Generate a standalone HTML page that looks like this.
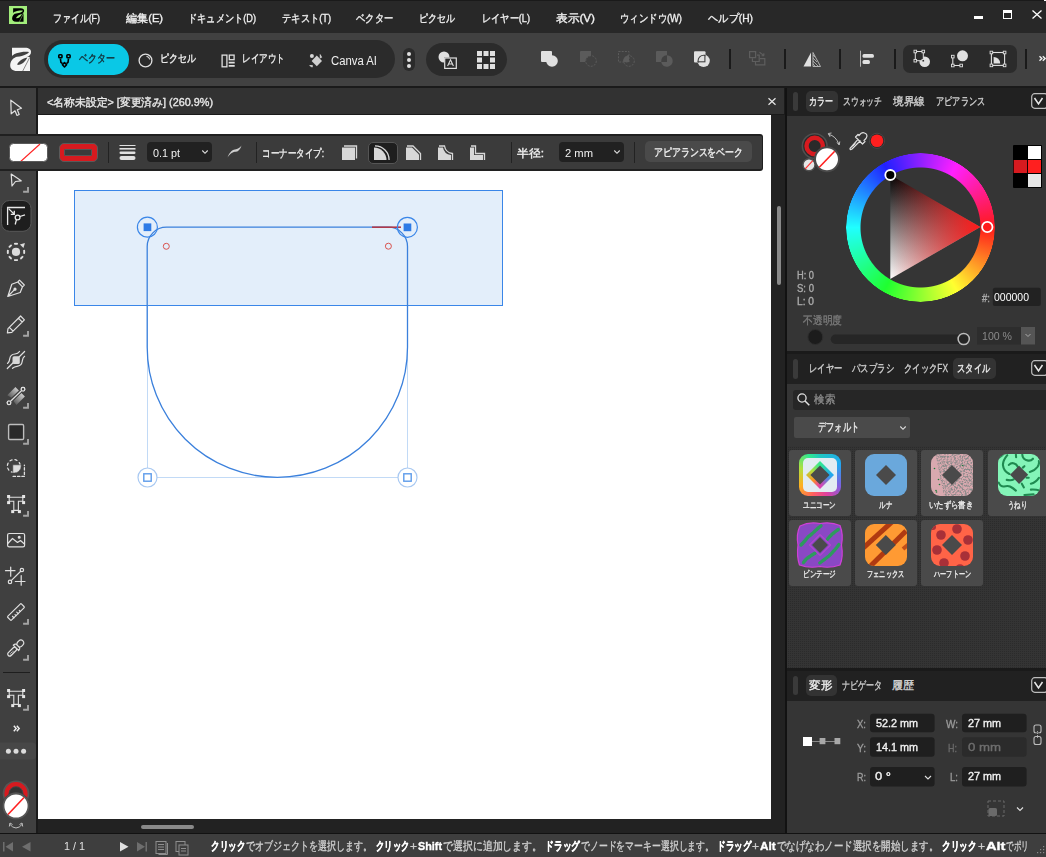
<!DOCTYPE html>
<html><head><meta charset="utf-8">
<style>
*{box-sizing:border-box;margin:0;padding:0}
html,body{width:1046px;height:857px;overflow:hidden;background:#1b1b1b;font-family:"Liberation Sans",sans-serif;}
.a{position:absolute}
.t{position:absolute;white-space:nowrap;transform-origin:0 0;line-height:1;-webkit-text-stroke-width:0.35px}
svg{position:absolute;overflow:visible}
.dots{background-image:radial-gradient(rgba(255,255,255,0.035) 0.6px,transparent 0.8px);background-size:4px 4px}
</style></head><body>

<!-- MENU BAR -->
<div class="a" style="left:0;top:0;width:1046px;height:33px;background:#282828;border-top:1px solid #1a1a1a"></div>
<div class="a" style="left:1044px;top:0;width:2px;height:1px;background:#fff"></div>
<div class="a" style="left:9px;top:5.5px;width:18.3px;height:18.6px;background:#a3ee7c"></div>
<svg style="left:0;top:0" width="40" height="33" viewBox="0 0 40 33"><g transform="translate(12.1 8.2) scale(0.578) translate(-10.2 -47.75)">
<path d="M12 47.75H25C29 47.75 31 49.5 31 52C31 54.5 29.5 56 27 57H30V71H17C12.5 71 10.2 68.5 10.2 65.5C10.2 61 13 58 17 56.5L12 56z" fill="#000"/>
<path d="M11.8 56.8C12 54 22 51 29 52.1C27.5 54.8 20 57.5 11.8 56.8z" fill="#a3ee7c"/>
<path d="M17.6 65C16 63.5 22 58.5 27.3 57.6C26 61 22 65 17.6 65z" fill="#a3ee7c"/>
<path d="M22.5 71.5L29.8 57.3" stroke="#a3ee7c" stroke-width="0.8"/>
</g></svg>
<div class="t" style="left:53px;top:13px;font-size:11px;color:#f0f0f0;--w:47;transform:scaleX(0.8097)">ファイル(F)</div>
<div class="t" style="left:126px;top:13px;font-size:11px;color:#f0f0f0;--w:37;transform:scaleX(1.0090)">編集(E)</div>
<div class="t" style="left:188px;top:13px;font-size:11px;color:#f0f0f0;--w:68;transform:scaleX(0.8366)">ドキュメント(D)</div>
<div class="t" style="left:282px;top:13px;font-size:11px;color:#f0f0f0;--w:49;transform:scaleX(0.8441)">テキスト(T)</div>
<div class="t" style="left:356px;top:13px;font-size:11px;color:#f0f0f0;--w:37;transform:scaleX(0.8409)">ベクター</div>
<div class="t" style="left:419px;top:13px;font-size:11px;color:#f0f0f0;--w:36;transform:scaleX(0.8182)">ピクセル</div>
<div class="t" style="left:482px;top:13px;font-size:11px;color:#f0f0f0;--w:48;transform:scaleX(0.8355)">レイヤー(L)</div>
<div class="t" style="left:556px;top:13px;font-size:11px;color:#f0f0f0;--w:39;transform:scaleX(1.0635)">表示(V)</div>
<div class="t" style="left:620px;top:13px;font-size:11px;color:#f0f0f0;--w:62;transform:scaleX(0.8526)">ウィンドウ(W)</div>
<div class="t" style="left:708px;top:13px;font-size:11px;color:#f0f0f0;--w:45;transform:scaleX(0.9320)">ヘルプ(H)</div>
<div class="a" style="left:974px;top:16px;width:9px;height:3px;background:#fff"></div>
<div class="a" style="left:1003px;top:10px;width:9px;height:9px;border:1.2px solid #fff;border-top-width:3px"></div>
<svg style="left:1032px;top:10px" width="10" height="9" viewBox="0 0 10 9"><path d="M0.5 0.5L9.5 8.5M9.5 0.5L0.5 8.5" stroke="#fff" stroke-width="1.3"/></svg>

<!-- TOOLBAR -->
<div class="a" style="left:0;top:33px;width:1046px;height:53px;background:#414141"></div>
<div class="a" style="left:0;top:86px;width:1046px;height:2px;background:#1a1a1a"></div>
<svg style="left:0;top:0" width="40" height="80" viewBox="0 0 40 80"><g id="lg">
<path d="M12 47.75H25C29 47.75 31 49.5 31 52C31 54.5 29.5 56 27 57H30V71H17C12.5 71 10.2 68.5 10.2 65.5C10.2 61 13 58 17 56.5L12 56z" fill="#f4f4f4"/>
<path d="M11.8 56.8C12 54 22 51 29 52.1C27.5 54.8 20 57.5 11.8 56.8z" fill="#414141"/>
<path d="M17.6 65C16 63.5 22 58.5 27.3 57.6C26 61 22 65 17.6 65z" fill="#414141"/>
<path d="M22.5 71.5L29.8 57.3" stroke="#414141" stroke-width="0.6"/>
</g></svg>
<div class="a" style="left:44px;top:40px;width:351px;height:38px;background:#2b2b2b;border-radius:19px"></div>
<div class="a" style="left:48px;top:44px;width:81px;height:31px;background:#0ac8e6;border-radius:15px"></div>
<svg style="left:57px;top:53px" width="15" height="15" viewBox="0 0 15 15"><g fill="none" stroke="#000" stroke-width="1.6" stroke-linejoin="round"><rect x="1.8" y="1.8" width="3.2" height="3" rx="0.8"/><rect x="9.9" y="1.8" width="3.2" height="3" rx="0.8"/><path d="M7.5 9.6L9.6 11.8 7.5 14 5.4 11.8z"/><path d="M3.4 5.6L3.9 9.3 5.6 10.6M11.5 5.6L11 9.3 9.4 10.6"/></g></svg>
<div class="t" style="left:79px;top:53.4px;font-size:11px;color:#152b33;--w:36;transform:scaleX(0.8182)">ベクター</div>
<svg style="left:138px;top:53px" width="15" height="15" viewBox="0 0 15 15"><circle cx="7.5" cy="7.5" r="6.4" fill="none" stroke="#e0e0e0" stroke-width="1.3"/><path d="M8.5 3.2A4.4 4.4 0 0 1 11.8 6.5" fill="none" stroke="#e0e0e0" stroke-width="1.1"/></svg>
<div class="t" style="left:160px;top:53.4px;font-size:11px;color:#f0f0f0;--w:36;transform:scaleX(0.8182)">ピクセル</div>
<svg style="left:220.5px;top:53.5px" width="15" height="14" viewBox="0 0 15 14"><g fill="none" stroke="#e0e0e0" stroke-width="1.3"><rect x="1.1" y="1.1" width="4.8" height="11.7"/><rect x="8.3" y="1.1" width="4.8" height="4.6"/></g><path d="M7.7 8.6h6M7.7 11.8h6" stroke="#e0e0e0" stroke-width="1.8"/></svg>
<div class="t" style="left:242px;top:53.4px;font-size:11px;color:#f0f0f0;--w:43;transform:scaleX(0.7818)">レイアウト</div>
<svg style="left:309px;top:53px" width="14" height="14" viewBox="0 0 14 14"><path d="M7.8 2.6L13 7.9 7.8 13.2 2.6 7.9z" fill="#cfcfcf"/><circle cx="2.9" cy="3" r="2" fill="#d6d6d6"/><path d="M11.2 1.6L12.6 4.3 11.3 5z" fill="#d6d6d6" stroke="#d6d6d6" stroke-width="0.8"/><path d="M0.7 12.6L3.4 12.4 3.2 14.1z" fill="#d6d6d6" stroke="#d6d6d6" stroke-width="0.8"/></svg>
<div class="t" style="left:331px;top:54.5px;font-size:12.5px;color:#f0f0f0;--w:46;transform:scaleX(0.9067);-webkit-text-stroke-width:0">Canva AI</div>
<div class="a" style="left:403px;top:48px;width:12px;height:23px;background:#2b2b2b;border-radius:6px"></div>
<div class="a" style="left:407px;top:52px;width:4px;height:4px;background:#e0e0e0;border-radius:2px"></div>
<div class="a" style="left:407px;top:58px;width:4px;height:4px;background:#e0e0e0;border-radius:2px"></div>
<div class="a" style="left:407px;top:64px;width:4px;height:4px;background:#e0e0e0;border-radius:2px"></div>
<div class="a" style="left:426px;top:43px;width:81px;height:33px;background:#2b2b2b;border-radius:16.5px"></div>
<svg style="left:438px;top:51px" width="19" height="18" viewBox="0 0 19 18"><circle cx="6" cy="6" r="5.5" fill="#e0e0e0"/><rect x="6" y="6.5" width="12.3" height="11" fill="#2b2b2b"/><rect x="6.7" y="7" width="11.6" height="10.4" fill="none" stroke="#e0e0e0" stroke-width="1.2"/><path d="M9.6 15L12.5 8.8 15.4 15M10.6 13h3.8" fill="none" stroke="#e0e0e0" stroke-width="1.1"/></svg>
<svg style="left:477px;top:51px" width="18" height="18" viewBox="0 0 18 18"><g fill="#e0e0e0"><rect x="0" y="0" width="5" height="5"/><rect x="6.5" y="0" width="5" height="5"/><rect x="13" y="0" width="5" height="5"/><rect x="0" y="6.5" width="5" height="5"/><rect x="13" y="6.5" width="5" height="5"/><rect x="0" y="13" width="5" height="5"/><rect x="6.5" y="13" width="5" height="5"/><rect x="13" y="13" width="5" height="5"/></g></svg>
<!-- boolean ops -->
<svg style="left:541px;top:51px" width="17" height="16" viewBox="0 0 17 16"><rect x="0" y="0" width="11" height="11" rx="1" fill="#e0e0e0"/><circle cx="11" cy="10" r="5.8" fill="#e0e0e0"/></svg>
<svg style="left:580px;top:51px" width="17" height="16" viewBox="0 0 17 16"><path d="M0 1a1 1 0 0 1 1-1h10v4.8A5.8 5.8 0 0 0 5.2 11H0z" fill="#5b5b5b"/><circle cx="11" cy="10" r="5.3" fill="none" stroke="#5b5b5b" stroke-width="1" stroke-dasharray="2 1.2"/></svg>
<svg style="left:618px;top:51px" width="17" height="16" viewBox="0 0 17 16"><rect x="0.5" y="0.5" width="10.5" height="10.5" fill="none" stroke="#5b5b5b" stroke-dasharray="2 1.2"/><path d="M11 4.2A5.8 5.8 0 0 0 5.2 10v1H11z" fill="#5b5b5b"/><circle cx="11" cy="10" r="5.3" fill="none" stroke="#5b5b5b" stroke-width="1" stroke-dasharray="2 1.2"/></svg>
<svg style="left:656px;top:51px" width="17" height="16" viewBox="0 0 17 16"><path d="M0 1a1 1 0 0 1 1-1h10v4.2A5.8 5.8 0 0 0 5.2 11H0z" fill="#5b5b5b"/><path d="M11 4.2A5.8 5.8 0 1 1 5.2 11H11z" fill="#5b5b5b"/></svg>
<svg style="left:693px;top:51px" width="18" height="18" viewBox="0 0 18 18"><defs><clipPath id="dsq"><rect x="1" y="0.2" width="11.5" height="11.2"/></clipPath><clipPath id="dci"><circle cx="10.6" cy="9.8" r="6.2"/></clipPath></defs><rect x="1" y="0.2" width="11.5" height="11.2" rx="1" fill="#e0e0e0"/><circle cx="10.6" cy="9.8" r="6.2" fill="#e0e0e0"/><circle cx="10.6" cy="9.8" r="5.5" fill="none" stroke="#414141" stroke-width="1.1" clip-path="url(#dsq)"/><rect x="1" y="0.2" width="10.9" height="10.6" fill="none" stroke="#414141" stroke-width="1.1" clip-path="url(#dci)"/></svg>
<div class="a" style="left:729.3px;top:49px;width:1.5px;height:20px;background:#1a1a1a"></div>
<svg style="left:749px;top:51px" width="17" height="17" viewBox="0 0 17 17"><g fill="none" stroke="#5e5e5e" stroke-width="1.2"><rect x="0.6" y="0.6" width="6" height="6"/><path d="M3.4 7.2V10.5H10.2V4.2H8"/><path d="M6.5 10.6V13.8H15.8V7.6H11"/></g><path d="M10.5 1.2L15 4.6M15 4.6L14.8 2.3M15 4.6L12.6 4.7" fill="none" stroke="#5e5e5e" stroke-width="1.1"/></svg>
<div class="a" style="left:784.3px;top:49px;width:1.5px;height:20px;background:#1a1a1a"></div>
<svg style="left:803px;top:52px" width="18" height="15" viewBox="0 0 18 15"><path d="M8 0.5V14.5H0.5z" fill="#e0e0e0"/><path d="M10 0.5V14.5H17.5z" fill="none" stroke="#bdbdbd" stroke-width="0.9"/><path d="M10 3l2 2M10 6l4 4M10 9l5.5 5.5M10 12l2.5 2.5" stroke="#bdbdbd" stroke-width="0.8"/></svg>
<div class="a" style="left:839.3px;top:49px;width:1.5px;height:20px;background:#1a1a1a"></div>
<svg style="left:859px;top:50px" width="16" height="17" viewBox="0 0 16 17"><rect x="1" y="0.7" width="1" height="16" fill="#b4b4b4"/><rect x="3.5" y="4" width="11.4" height="3.8" rx="1.5" fill="#e0e0e0"/><rect x="3.5" y="10" width="7.4" height="4" rx="1.5" fill="#e0e0e0"/></svg>
<div class="a" style="left:894.3px;top:49px;width:1.5px;height:20px;background:#1a1a1a"></div>
<div class="a" style="left:903px;top:45px;width:114px;height:28px;background:#2b2b2b;border-radius:7px"></div>
<svg style="left:914px;top:50px" width="17" height="18" viewBox="0 0 17 18"><circle cx="10.7" cy="11.8" r="5.3" fill="#e0e0e0"/><rect x="1.3" y="1.5" width="8" height="9.2" fill="#2b2b2b"/><rect x="1.3" y="1.5" width="8" height="9.2" fill="none" stroke="#e0e0e0" stroke-width="1"/><g fill="#2b2b2b" stroke="#e0e0e0" stroke-width="0.9"><rect x="0" y="0.2" width="2.6" height="2.6"/><rect x="8" y="0.2" width="2.6" height="2.6"/><rect x="0" y="9.4" width="2.6" height="2.6"/><rect x="8" y="9.4" width="2.6" height="2.6"/></g></svg>
<svg style="left:951px;top:50px" width="18" height="18" viewBox="0 0 18 18"><circle cx="11.5" cy="5.8" r="5.5" fill="#e0e0e0"/><path d="M1.8 7v8.5h8.5" fill="none" stroke="#e0e0e0" stroke-width="1.1"/><g fill="#2b2b2b" stroke="#e0e0e0" stroke-width="0.9"><rect x="0.5" y="5.3" width="2.6" height="2.6"/><rect x="0.5" y="14.2" width="2.6" height="2.6"/><rect x="8.9" y="14.2" width="2.6" height="2.6"/></g></svg>
<svg style="left:990px;top:50px" width="17" height="17" viewBox="0 0 17 17"><rect x="1.4" y="2.5" width="13.2" height="12.9" fill="none" stroke="#e0e0e0" stroke-width="1.1"/><path d="M3.6 7A6.5 6.5 0 0 1 10.2 13.4H3.6z" fill="#e0e0e0"/><g fill="#2b2b2b" stroke="#e0e0e0" stroke-width="0.9"><rect x="0.1" y="1.2" width="2.6" height="2.6"/><rect x="13.3" y="1.2" width="2.6" height="2.6"/><rect x="0.1" y="14.1" width="2.6" height="2.6"/><rect x="13.3" y="14.1" width="2.6" height="2.6"/></g></svg>
<div class="a" style="left:1025.3px;top:49px;width:1.5px;height:20px;background:#1a1a1a"></div>
<svg style="left:1039px;top:56px" width="7" height="5" viewBox="0 0 7 5"><path d="M0.5 0.3L2.8 2.5 0.5 4.7M3.8 0.3L6.1 2.5 3.8 4.7" fill="none" stroke="#f0f0f0" stroke-width="1.4"/></svg>

<!-- LEFT TOOLS -->
<div class="a" style="left:0;top:88px;width:36px;height:745px;background:#404040"></div>
<div class="a" style="left:36px;top:88px;width:2px;height:747px;background:#1a1a1a"></div>
<svg style="left:0;top:88px" width="36" height="745" viewBox="0 88 36 745">
<g fill="none" stroke="#e0e0e0" stroke-width="1.2" stroke-linejoin="round" stroke-linecap="round">
<!-- move -->
<path d="M10.8 100.2L21.5 108.3 17.3 109.8 19.2 114.5 17 115.5 15 110.8 11.2 113.8z"/>
<!-- node -->
<path d="M11.2 174L21.2 180.8 15.5 181.5 12 186z"/>
<!-- pen -->
<path d="M19.5 280.2L24.3 285 22.5 286.8 17.8 282z M17.8 282L22.5 286.8 20.2 292.5 7.8 296.5 11.8 284.2z M8.2 296L14.3 289.9"/>
<circle cx="15" cy="289.2" r="1" fill="#e0e0e0"/>
<!-- pencil -->
<path d="M20.6 316L24.4 319.8 11.8 332.4 7.4 332.9 8 328.6z M18.4 318.2L22.2 322 M9.3 327.3L13 331"/>
<!-- vector brush -->
<path d="M7.3 368.5L24.6 351.5 M7.5 363.4C9.5 362 9.6 360.5 9.8 358.5C10.2 355.5 12 354.2 15 354C17.5 353.8 18.5 353 19.5 351.5 M12.5 368.3C14 367 15.5 366.5 17 366.3C20 366 21.8 364.5 22.2 361.5C22.5 359.5 22.6 357.5 24.6 356.3"/>
<!-- fill tool -->
<circle cx="9" cy="402.8" r="1.8"/><circle cx="23" cy="389.2" r="1.8"/><path d="M10.3 401.5L21.7 390.5"/>
<!-- rect -->
<rect x="8.6" y="424.5" width="15" height="15" rx="1.2" stroke="#bdbdbd" fill="#2a2a2a" stroke-width="1.4"/>
<!-- dotted select -->
<circle cx="13.8" cy="466" r="6.4" stroke-dasharray="2.1 3" stroke-width="1.3"/>
<path d="M13.1 476.4H24.4V465.1" stroke-dasharray="2.4 2" stroke-width="1.3"/>
<!-- image -->
<rect x="7.6" y="533.5" width="17" height="13.4" rx="1.6"/>
<path d="M7.8 543.5L12.5 538.5 17.5 542.5 20.5 540.5 24.4 544"/>
<circle cx="19.2" cy="537.2" r="0.9" fill="#e0e0e0"/>
<!-- transform -->
<path d="M5.5 570.7H15 M10.7 567V576.2 M15.3 581.5H25 M21.2 575.5V585.2 M11.2 580.6L20.7 571.2"/>
<circle cx="10" cy="581.9" r="1.7"/><circle cx="21.9" cy="570" r="1.7"/>
<!-- ruler -->
<g transform="translate(15.95 612) rotate(-44.4)"><rect x="-9.6" y="-2.7" width="19.2" height="5.4" rx="1"/><path d="M-5.5 2.7V0.6M-2.5 2.7V1.2M0.5 2.7V0.6M3.5 2.7V1.2"/></g>
<!-- eyedropper -->
<g transform="translate(15.6 648.2) rotate(-45)" fill="#404040"><rect x="-10.3" y="-2" width="11" height="4" rx="2"/><rect x="3" y="-2.9" width="7.4" height="5.8" rx="2.9"/><path d="M0.5 -3.8Q2.5 -3.8 3.2 -2.6V2.6Q2.5 3.8 0.5 3.8z"/><g fill="#e0e0e0" stroke="none"><circle cx="-7.6" cy="0.3" r="0.55"/><circle cx="-5.8" cy="0.3" r="0.55"/><circle cx="-4" cy="0.3" r="0.55"/></g></g>
</g>
<!-- corner marks -->
<g fill="none" stroke="#a4a4a4" stroke-width="1.9">
<path d="M23.1 191.8H28V187"/>
<path d="M23.1 335.8H28V331"/>
<path d="M23.1 407.8H28V403"/>
<path d="M23.1 443.8H28V439"/>
<path d="M23.1 515.8H28V511"/>
<path d="M23.1 623.8H28V619"/>
<path d="M23.1 659.8H28V655"/>
<path d="M23.1 709.8H28V705"/>
</g>
<!-- selected corner tool -->
<rect x="1.5" y="200.5" width="29.5" height="30.8" rx="8" fill="#1e1e1e" stroke="#585858" stroke-width="1"/>
<g fill="none" stroke="#e8e8e8" stroke-width="1.3">
<path d="M7.6 225V207.5H25"/>
<path d="M8.6 208.6L14.3 214.3 M14.3 210.8V214.3H10.8"/>
<circle cx="17.6" cy="217.5" r="2.4"/><path d="M16.4 219.8L15.2 224.5 M19.8 216.5L25 214.8"/>
</g>
<!-- dotted circle w/ triangle -->
<path d="M23.99 250.06A8.2 8.2 0 0 1 23.99 253.74 M22.95 256.25A8.2 8.2 0 0 1 20.35 258.85 M17.84 259.89A8.2 8.2 0 0 1 14.16 259.89 M11.65 258.85A8.2 8.2 0 0 1 9.05 256.25 M8.01 253.74A8.2 8.2 0 0 1 8.01 250.06 M9.05 247.55A8.2 8.2 0 0 1 11.65 244.95 M14.16 243.91A8.2 8.2 0 0 1 17.84 243.91" fill="none" stroke="#e0e0e0" stroke-width="1.9"/>
<circle cx="16" cy="251.9" r="4.1" fill="#dcdcdc"/>
<path d="M19.9 244.4L24.9 243 23.5 248.1z" fill="#dcdcdc"/>
<!-- vector brush center -->
<rect x="12.5" y="356.3" width="7.3" height="7.6" rx="1.5" fill="#d8d8d8"/>
<!-- fill gradient bars -->
<defs><linearGradient id="fg1" x1="0" y1="1" x2="1" y2="0"><stop offset="0" stop-color="#4a4a4a"/><stop offset="1" stop-color="#e0e0e0"/></linearGradient></defs>
<path d="M7.3 395.2L15.4 387 18.9 390.5 11.3 397.7z" fill="url(#fg1)"/>
<path d="M13.4 401L21.4 393.1 24.9 396.4 16.4 404.9z" fill="url(#fg1)"/>
<g fill="#404040" stroke="#e0e0e0" stroke-width="1.2"><path d="M10.3 401.5L21.7 390.5" stroke="#404040" stroke-width="2.6"/><path d="M10.3 401.5L21.7 390.5"/><circle cx="9" cy="402.8" r="1.8"/><circle cx="23" cy="389.2" r="1.8"/></g>
<!-- dotted select fill -->
<path d="M12.8 464.8H21.2V466A7 7 0 0 1 14.2 473.1H12.8z" fill="#dcdcdc" stroke="#404040" stroke-width="0.6"/>
<!-- text frame tools -->
<path d="M9.2 497.2H22.8V501.3H18.4V510.4H13.8V501.3H9.2z" fill="none" stroke="#e0e0e0" stroke-width="1.1"/><rect x="7.1" y="495" width="3" height="3" fill="#e6e6e6"/><rect x="22.1" y="495" width="3" height="3" fill="#e6e6e6"/><rect x="7.1" y="501.1" width="3" height="3" fill="#e6e6e6"/><rect x="22.1" y="501.1" width="3" height="3" fill="#e6e6e6"/><rect x="11.2" y="510.1" width="3" height="3" fill="#e6e6e6"/><rect x="17.9" y="510.1" width="3" height="3" fill="#e6e6e6"/>
<path d="M9.2 691.2H22.8V695.3H18.4V704.4H13.8V695.3H9.2z" fill="none" stroke="#e0e0e0" stroke-width="1.1"/><rect x="7.1" y="689" width="3" height="3" fill="#e6e6e6"/><rect x="22.1" y="689" width="3" height="3" fill="#e6e6e6"/><rect x="7.1" y="695.1" width="3" height="3" fill="#e6e6e6"/><rect x="22.1" y="695.1" width="3" height="3" fill="#e6e6e6"/><rect x="11.2" y="704.1" width="3" height="3" fill="#e6e6e6"/><rect x="17.9" y="704.1" width="3" height="3" fill="#e6e6e6"/>
<rect x="3" y="672" width="27" height="1" fill="#1e1e1e"/>
<path d="M13.8 725.8L16.2 728.5 13.8 731.2M16.8 725.8L19.2 728.5 16.8 731.2" fill="none" stroke="#f0f0f0" stroke-width="1.4"/>
<path d="M0 742.5H32A4 4 0 0 1 36 746.5V755.5A4 4 0 0 1 32 759.5H0z" fill="#474747"/>
<circle cx="8.4" cy="751.2" r="2.5" fill="#dcdcdc"/><circle cx="16" cy="751.2" r="2.5" fill="#dcdcdc"/><circle cx="23.6" cy="751.2" r="2.5" fill="#dcdcdc"/>
<!-- colour widget -->
<circle cx="16" cy="793.7" r="13.3" fill="#555" />
<circle cx="16" cy="793.7" r="9.4" fill="#333" stroke="#d71a1f" stroke-width="4.4"/>
<circle cx="16" cy="793.7" r="7" fill="none" stroke="#4a4a4a" stroke-width="0.8"/>
<circle cx="16" cy="806" r="13.8" fill="#404040"/>
<circle cx="16" cy="806" r="12.5" fill="#fff" stroke="#555" stroke-width="1.8"/>
<path d="M8 814.5L24 797.5" stroke="#ff2020" stroke-width="1.6"/>
<path d="M9.5 824Q16 832 22.5 824 M9.3 826.5L10 823 12.5 824.5 M22.7 826.5L22 823 19.5 824.5" fill="none" stroke="#bdbdbd" stroke-width="1"/>
</svg>

<!-- DOC TAB -->
<div class="a dots" style="left:38px;top:88px;width:746px;height:26px;background:#323232"></div>
<div class="a" style="left:38px;top:114px;width:746px;height:1px;background:#1a1a1a"></div>
<div class="t" style="left:47px;top:97.3px;font-size:11px;color:#e8e8e8;--w:166;transform:scaleX(0.9839)">&lt;名称未設定&gt; [変更済み] (260.9%)</div>
<svg style="left:768px;top:98px" width="8" height="7" viewBox="0 0 8 7"><path d="M0.5 0.3L7.5 6.7M7.5 0.3L0.5 6.7" stroke="#e8e8e8" stroke-width="1.2"/></svg>

<!-- CANVAS -->
<div class="a" style="left:38px;top:115px;width:733px;height:704px;background:#fff"></div>
<svg style="left:38px;top:115px" width="733" height="704" viewBox="38 115 733 704">
<rect x="74.5" y="190.5" width="428" height="115" fill="#e3eefa" stroke="#3a86e8" stroke-width="1"/>
<path d="M147.5 305.5V477.5H407.5V305.5" fill="none" stroke="#c2daf6" stroke-width="1"/>
<path d="M147.2 246.5A19.3 19.3 0 0 1 166.5 227.2H388.2A19.3 19.3 0 0 1 407.5 246.5V347.2A130.15 130.15 0 0 1 147.2 347.2z" fill="none" stroke="#3b80dc" stroke-width="1.3"/>
<path d="M372 227.2H401" stroke="#b03a4a" stroke-width="1.6"/>
<circle cx="166.3" cy="246.3" r="3" fill="none" stroke="#d9534f" stroke-width="1"/>
<circle cx="388.4" cy="246.2" r="3" fill="none" stroke="#d9534f" stroke-width="1"/>
<circle cx="147.4" cy="227.2" r="10" fill="none" stroke="#3a86e8" stroke-width="1.2"/>
<rect x="143.6" y="223.4" width="7.7" height="7.7" fill="#2e7be6"/>
<circle cx="407.4" cy="227.3" r="10" fill="none" stroke="#3a86e8" stroke-width="1.2"/>
<rect x="403.6" y="223.5" width="7.7" height="7.7" fill="#2e7be6"/>
<circle cx="147.5" cy="477.5" r="9.5" fill="#fff" stroke="#a9c9f2" stroke-width="1.2"/>
<rect x="143.8" y="473.8" width="7.4" height="7.4" fill="none" stroke="#5d9bea" stroke-width="1.4"/>
<circle cx="407.5" cy="477.5" r="9.5" fill="#fff" stroke="#a9c9f2" stroke-width="1.2"/>
<rect x="403.8" y="473.8" width="7.4" height="7.4" fill="none" stroke="#5d9bea" stroke-width="1.4"/>
</svg>
<!-- CONTEXT BAR -->
<div class="a" style="left:0;top:134px;width:763px;height:37px;background:#3b3b3b;border:1px solid #202020;border-left:none;border-radius:0 3px 3px 0;border-top-width:2px;border-bottom-width:2px"></div>
<div class="a" style="left:8.5px;top:142.5px;width:39px;height:19px;background:#fff;border-radius:4.5px;border:1px solid #5a5a5a;overflow:hidden"><svg style="left:0;top:0" width="39" height="19"><path d="M9 19L30 0" stroke="#ff2020" stroke-width="1.2"/></svg></div>
<div class="a" style="left:58.5px;top:142.5px;width:39px;height:19px;background:#d71a1f;border-radius:5px;border:1px solid #5a5a5a"></div>
<div class="a" style="left:64px;top:149px;width:28px;height:7px;background:#3b3b3b;border-radius:1px;border:0.5px solid #555"></div>
<div class="a" style="left:108px;top:142px;width:1px;height:21px;background:#222"></div>
<svg style="left:119px;top:145px" width="17" height="16" viewBox="0 0 17 16"><g fill="#e0e0e0"><rect x="0.5" y="0" width="16" height="1"/><rect x="0.5" y="3" width="16" height="1.6"/><rect x="0.5" y="6.5" width="16" height="2.4" rx="1.2"/><rect x="0.5" y="11" width="16" height="4" rx="2"/></g></svg>
<div class="a" style="left:147px;top:142px;width:65px;height:20px;background:#212121;border-radius:4px"></div>
<div class="t" style="left:153px;top:148.3px;font-size:11px;color:#f0f0f0;--w:27;transform:scaleX(0.9807);-webkit-text-stroke-width:0">0.1 pt</div>
<svg style="left:202px;top:150px" width="6" height="4" viewBox="0 0 6 4"><path d="M0.3 0.5L3 3.3 5.7 0.5" fill="none" stroke="#e0e0e0" stroke-width="1.1"/></svg>
<svg style="left:227px;top:145px" width="15" height="13" viewBox="0 0 15 13"><path d="M0.5 12.5C3 6 6 4.5 9 4.2 11 4 13 2.5 14.5 0.5 13.5 4 11.5 6.5 9 6.8 6 7 3.5 8 0.5 12.5z" fill="#cfcfcf"/></svg>
<div class="a" style="left:256px;top:142px;width:1px;height:21px;background:#222"></div>
<div class="t" style="left:262px;top:147.8px;font-size:11px;color:#f0f0f0;--w:62;transform:scaleX(0.7744)">コーナータイプ:</div>
<svg style="left:342px;top:145px" width="16" height="15" viewBox="0 0 16 15"><path d="M0 2.5H13V15H0z" fill="#d8d8d8"/><path d="M2 1H14.5V13.5" fill="none" stroke="#d8d8d8" stroke-width="1.3"/></svg>
<div class="a" style="left:368px;top:142px;width:30px;height:22px;background:#1e1e1e;border-radius:5px;border:1px solid #555"></div>
<svg style="left:374px;top:145px" width="16" height="15" viewBox="0 0 16 15"><path d="M0 2.5A12.5 12.5 0 0 1 12.5 15H0z" fill="#d8d8d8"/><path d="M1 0.9A14 14 0 0 1 15.1 15" fill="none" stroke="#d8d8d8" stroke-width="1.3"/></svg>
<svg style="left:406px;top:145px" width="16" height="15" viewBox="0 0 16 15"><path d="M0 2.5H6L13 9.5V15H0z" fill="#d8d8d8"/><path d="M1 1H7L14.5 8.5V15" fill="none" stroke="#d8d8d8" stroke-width="1.3"/></svg>
<svg style="left:438px;top:145px" width="16" height="15" viewBox="0 0 16 15"><path d="M0 2.5H5Q6 9 13 10V15H0z" fill="#d8d8d8"/><path d="M1 1H6.5Q7.5 7.5 14.5 8.5V15" fill="none" stroke="#d8d8d8" stroke-width="1.3"/></svg>
<svg style="left:470px;top:145px" width="16" height="15" viewBox="0 0 16 15"><path d="M0 2.5H4V10H13V15H0z" fill="#d8d8d8"/><path d="M1 1H5.5V8.5H14.5V15" fill="none" stroke="#d8d8d8" stroke-width="1.3"/></svg>
<div class="a" style="left:511px;top:142px;width:1px;height:21px;background:#222"></div>
<div class="t" style="left:517px;top:147.8px;font-size:11px;color:#f0f0f0;--w:27;transform:scaleX(1.0773)">半径:</div>
<div class="a" style="left:559px;top:142px;width:65px;height:20px;background:#212121;border-radius:4px"></div>
<div class="t" style="left:565px;top:148.3px;font-size:11px;color:#f0f0f0;--w:28;transform:scaleX(1.0182);-webkit-text-stroke-width:0">2 mm</div>
<svg style="left:614px;top:150px" width="6" height="4" viewBox="0 0 6 4"><path d="M0.3 0.5L3 3.3 5.7 0.5" fill="none" stroke="#e0e0e0" stroke-width="1.1"/></svg>
<div class="a" style="left:634px;top:142px;width:1px;height:21px;background:#222"></div>
<div class="a" style="left:645px;top:141px;width:107px;height:21px;background:#4a4a4a;border-radius:5px"></div>
<div class="t" style="left:654px;top:146.8px;font-size:11px;color:#f0f0f0;--w:89;transform:scaleX(0.8091)">アピアランスをベーク</div>

<div class="a dots" style="left:771px;top:115px;width:14px;height:718px;background:#222"></div>
<div class="a" style="left:777px;top:206px;width:4px;height:79px;background:#8a8a8a;border-radius:2px"></div>
<div class="a dots" style="left:38px;top:819px;width:733px;height:14px;background:#222"></div>
<div class="a" style="left:141px;top:825px;width:53px;height:4px;background:#8a8a8a;border-radius:2px"></div>
<div class="a" style="left:785px;top:88px;width:2px;height:745px;background:#121212"></div>

<!-- RIGHT PANEL -->
<div class="a dots" style="left:787px;top:88px;width:259px;height:745px;background:#353535"></div>
<!-- color panel header -->
<div class="a dots" style="left:787px;top:88px;width:259px;height:28px;background:#212121"></div>
<div class="a" style="left:793px;top:92px;width:5px;height:19px;background:#3a3a3a;border-radius:2.5px"></div>
<div class="a" style="left:806px;top:91px;width:32px;height:21px;background:#333;border-radius:5px"></div>
<div class="t" style="left:809px;top:95.8px;font-size:11px;color:#f0f0f0;--w:24;transform:scaleX(0.7273)">カラー</div>
<div class="t" style="left:843px;top:95.8px;font-size:11px;color:#cfcfcf;--w:39;transform:scaleX(0.7091)">スウォッチ</div>
<div class="t" style="left:893px;top:95.8px;font-size:11px;color:#cfcfcf;--w:32;transform:scaleX(0.9697)">境界線</div>
<div class="t" style="left:936px;top:95.8px;font-size:11px;color:#cfcfcf;--w:49;transform:scaleX(0.7424)">アピアランス</div>
<svg style="left:1031px;top:93px" width="15" height="16" viewBox="0 0 15 16"><rect x="0.7" y="0.7" width="16" height="14.6" rx="3" fill="none" stroke="#bdbdbd" stroke-width="1.2"/><path d="M3.5 5L7.5 11 11.5 5" fill="none" stroke="#e8e8e8" stroke-width="1.5"/></svg>
<!-- colour widget -->
<svg style="left:787px;top:116px" width="259" height="236" viewBox="787 116 259 236">
<defs>
<linearGradient id="tri1" x1="0" y1="0" x2="0" y2="1"><stop offset="0" stop-color="#000"/><stop offset="1" stop-color="#fff"/></linearGradient>
<linearGradient id="tri2" gradientUnits="userSpaceOnUse" x1="890.3" y1="0" x2="980.3" y2="0"><stop offset="0" stop-color="#e01818" stop-opacity="0"/><stop offset="1" stop-color="#ff1a1a" stop-opacity="1"/></linearGradient>
</defs>
<circle cx="814.7" cy="146" r="12.3" fill="#2a2a2a" stroke="#505050" stroke-width="1.6"/>
<circle cx="814.7" cy="146" r="8.2" fill="none" stroke="#d71a1f" stroke-width="4.4"/>
<circle cx="809" cy="164.7" r="6" fill="#e6e6e6" stroke="#505050" stroke-width="1.4"/>
<path d="M805.2 168.8L812.8 160.6" stroke="#ff3030" stroke-width="1.2"/>
<circle cx="827" cy="159.2" r="12" fill="#fff" stroke="#4a4a4a" stroke-width="2"/>
<path d="M819.3 167.2L834.7 151.2" stroke="#ff2020" stroke-width="1.6"/>
<path d="M828.5 134.3Q836 136 839 144.5 M828.3 133.5L830 136.8M828.3 133.5L831.5 133M839.2 145L837 142.5M839.2 145L839.8 141.5" fill="none" stroke="#bdbdbd" stroke-width="1"/>
<path d="M864.5 133Q868.5 134.5 866 138.5L864 140.5 865 141.5 862.5 144 855.5 137 858 134.5 859 135.5 861.2 133.2Q863 132 864.5 133z M860.5 140.5L852 149Q850 150.5 850 148.5L858.2 139.2" fill="none" stroke="#e0e0e0" stroke-width="1.2" stroke-linejoin="round"/>
<path d="M852.5 146.5L855.5 143.5" stroke="#e0e0e0" stroke-width="0.9"/>
<circle cx="877" cy="140.8" r="7.6" fill="#2a2a2a" stroke="#474747" stroke-width="1"/>
<circle cx="877" cy="140.8" r="6.3" fill="#ff1f1f"/>
<rect x="1013" y="145" width="29" height="43" fill="#000" rx="1"/>
<rect x="1028" y="146" width="13" height="13" fill="#fff"/>
<rect x="1013.7" y="160" width="13.4" height="13" fill="#d71a1f"/>
<rect x="1028" y="160" width="13" height="13" fill="#ff1f1f"/>
<rect x="1028" y="174" width="13" height="13" fill="#e6e6e6"/>
<path d="M890.3 175L980.3 227 890.3 279z" fill="url(#tri1)"/>
<path d="M890.3 175L980.3 227 890.3 279z" fill="url(#tri2)"/>
<rect x="992.8" y="287.8" width="48" height="18.2" rx="2" fill="#222"/>
<path d="M815.3 337m-7.5 0a7.5 7.5 0 1 0 15 0a7.5 7.5 0 1 0 -15 0" fill="#1c1c1c" stroke="#2f2f2f" stroke-width="1"/>
<rect x="830.7" y="334.6" width="139.3" height="9.4" rx="4.7" fill="#262626"/>
<circle cx="963.7" cy="339" r="5.6" fill="#262626" stroke="#bdbdbd" stroke-width="1.5"/>
<rect x="977" y="327" width="44" height="17.5" fill="#2d2d2d"/>
<rect x="1021" y="327" width="14" height="17.5" fill="#555"/>
<path d="M1025.5 334L1028 336.5 1030.5 334" fill="none" stroke="#aaa" stroke-width="1"/>
</svg>
<div id="wheel" class="a" style="left:845.8px;top:152.5px;width:149px;height:149px;border-radius:50%;background:conic-gradient(from 90deg,#ff1a1a,#ffff30 60deg,#20ff30 120deg,#20ffff 180deg,#2020ff 240deg,#ff20ff 300deg,#ff1a1a 360deg);-webkit-mask:radial-gradient(circle,transparent 59.5px,#000 60.5px,#000 74px,transparent 74.7px)"></div>
<svg style="left:787px;top:116px" width="259" height="236" viewBox="787 116 259 236"><circle cx="890.3" cy="175" r="5" fill="#000" stroke="#fff" stroke-width="1.8"/>
<circle cx="987.3" cy="227" r="5.2" fill="#ff1a1a" stroke="#fff" stroke-width="1.8"/>
</svg>
<div class="t" style="left:797px;top:271px;font-size:10px;color:#aaa;--w:17;transform:scaleX(0.9267)">H: 0</div>
<div class="t" style="left:797px;top:284px;font-size:10px;color:#aaa;--w:17;transform:scaleX(0.9552)">S: 0</div>
<div class="t" style="left:797px;top:297px;font-size:10px;color:#aaa;--w:17;transform:scaleX(1.0187)">L: 0</div>
<div class="t" style="left:982px;top:294px;font-size:10px;color:#aaa;--w:8;transform:scaleX(0.9588)">#:</div>
<div class="t" style="left:994px;top:292.3px;font-size:11px;color:#fff;--w:35;transform:scaleX(0.9532);-webkit-text-stroke-width:0">000000</div>
<div class="t" style="left:803px;top:315px;font-size:11px;color:#7a7a7a;--w:39;transform:scaleX(0.8864)">不透明度</div>
<div class="t" style="left:982px;top:331.3px;font-size:11px;color:#8a8a8a;--w:30;transform:scaleX(0.9614);-webkit-text-stroke-width:0">100 %</div>
<div class="a" style="left:787px;top:351px;width:259px;height:3px;background:#1a1a1a"></div>

<!-- style panel header -->
<div class="a dots" style="left:787px;top:354px;width:259px;height:30px;background:#212121"></div>
<div class="a" style="left:793px;top:359px;width:5px;height:20px;background:#3a3a3a;border-radius:2.5px"></div>
<div class="t" style="left:809px;top:362.6px;font-size:11px;color:#cfcfcf;--w:33;transform:scaleX(0.7500)">レイヤー</div>
<div class="t" style="left:852px;top:362.6px;font-size:11px;color:#cfcfcf;--w:42;transform:scaleX(0.7636)">パスブラシ</div>
<div class="t" style="left:904px;top:362.6px;font-size:11px;color:#cfcfcf;--w:44;transform:scaleX(0.7578)">クイックFX</div>
<div class="a" style="left:953px;top:358px;width:43px;height:21px;background:#333;border-radius:5px"></div>
<div class="t" style="left:957px;top:362.6px;font-size:11px;color:#f0f0f0;--w:33;transform:scaleX(0.7500)">スタイル</div>
<svg style="left:1031px;top:360px" width="15" height="16" viewBox="0 0 15 16"><rect x="0.7" y="0.7" width="16" height="14.6" rx="3" fill="none" stroke="#bdbdbd" stroke-width="1.2"/><path d="M3.5 5L7.5 11 11.5 5" fill="none" stroke="#e8e8e8" stroke-width="1.5"/></svg>
<div class="a dots" style="left:793px;top:390px;width:253px;height:20px;background:#262626;border-radius:3px 0 0 3px"></div>
<svg style="left:797px;top:393px" width="13" height="13" viewBox="0 0 13 13"><circle cx="5" cy="5" r="4.1" fill="none" stroke="#e0e0e0" stroke-width="1.3"/><path d="M8 8L12.3 12.3" stroke="#e0e0e0" stroke-width="1.5"/></svg>
<div class="t" style="left:814px;top:394.3px;font-size:11px;color:#8a8a8a;--w:21;transform:scaleX(0.9545)">検索</div>
<div class="a" style="left:794px;top:417px;width:116px;height:21px;background:#4a4a4a;border-radius:2px"></div>
<div class="t" style="left:818px;top:421px;font-size:12px;color:#f0f0f0;--w:41;transform:scaleX(0.6833)">デフォルト</div>
<svg style="left:900px;top:426px" width="6" height="4" viewBox="0 0 6 4"><path d="M0.3 0.5L3 3.3 5.7 0.5" fill="none" stroke="#e0e0e0" stroke-width="1.1"/></svg>
<div class="a" style="left:787px;top:446px;width:259px;height:222px;background:conic-gradient(from 90deg at 1px 1px,#2b2b2b 90deg,transparent 0) 0 0/2px 2px,#343434"></div>
<div class="a" style="left:787px;top:668px;width:259px;height:3px;background:#1a1a1a"></div>
<svg style="left:787px;top:446px" width="259" height="222" viewBox="787 446 259 222">
<defs>
<filter id="noise" x="0" y="0" width="100%" height="100%" color-interpolation-filters="sRGB"><feTurbulence type="fractalNoise" baseFrequency="0.55" numOctaves="2" seed="7" result="t"/><feColorMatrix in="t" values="0 0 0 0 0.54  0 0 0 0 0.54  0 0 0 0 0.54  3.6 0 0 0 -1.45" result="g"/><feMerge><feMergeNode in="SourceGraphic"/><feMergeNode in="g"/></feMerge></filter>
<clipPath id="c1"><rect x="799" y="454" width="42" height="42" rx="9"/></clipPath>
<clipPath id="band"><path d="M935.5 454H973V496H944z"/></clipPath><clipPath id="c3"><rect x="931" y="454" width="42" height="42" rx="9"/></clipPath>
<clipPath id="c4"><rect x="998" y="454" width="42" height="42" rx="9"/></clipPath>
<clipPath id="c6"><rect x="865" y="524" width="42" height="42" rx="9"/></clipPath>
<clipPath id="c7"><rect x="931" y="524" width="42" height="42" rx="9"/></clipPath>
</defs>
<g fill="#4a4a4a">
<rect x="789" y="450" width="62" height="66" rx="3"/>
<rect x="855" y="450" width="62" height="66" rx="3"/>
<rect x="921" y="450" width="62" height="66" rx="3"/>
<rect x="988" y="450" width="62" height="66" rx="3"/>
<rect x="789" y="520" width="62" height="66" rx="3"/>
<rect x="855" y="520" width="62" height="66" rx="3"/>
<rect x="921" y="520" width="62" height="66" rx="3"/>
</g>
<!-- luna -->
<rect x="865" y="454" width="42" height="42" rx="9" fill="#6aa8dc"/>
<path d="M886 465L896 475 886 485 876 475z" fill="#4a4a4a"/>
<!-- doodle -->
<g clip-path="url(#c3)">
<rect x="931" y="454" width="42" height="42" fill="#d9a9af"/>
<path d="M935.5 454H973V496H944z" fill="#d9a9af" filter="url(#noise)" clip-path="url(#band)"/>
</g>
<g fill="#1f7a3a"><circle cx="934.5" cy="468.5" r="0.8"/><circle cx="938.5" cy="479.5" r="0.8"/><circle cx="939.5" cy="484.5" r="0.8"/><circle cx="936" cy="490.5" r="0.8"/><circle cx="936.5" cy="492" r="0.8"/><circle cx="962.5" cy="465.5" r="0.8"/></g>
<path d="M952 465L962 475 952 485 942 475z" fill="#4a4a4a"/>
<!-- wave -->
<g clip-path="url(#c4)">
<rect x="998" y="454" width="42" height="42" fill="#84f5b8"/>
<g fill="none" stroke="#1f8a50" stroke-width="2.1" stroke-linecap="round">
<path d="M1007.3 455.2Q1002.5 461 1003 465.4Q1003.5 471 1009.4 474"/>
<path d="M1015.9 454.7L1016.1 457.1"/>
<path d="M1022.3 454.7Q1022.5 459.5 1028.2 460.6Q1031 461 1033 458.7"/>
<path d="M1008.9 464.9Q1012 461.5 1015.9 464.3Q1017.5 466 1018.5 468.1"/>
<path d="M1022.8 467.6L1024.4 466.2"/>
<path d="M1029.8 471.9Q1034.6 470.8 1037.4 467Q1039.5 464 1038.9 461.1"/>
<path d="M1006.7 479.9Q1011.6 480.8 1013.7 479.4"/>
<path d="M1026.6 477.8L1028.7 477.8"/>
<path d="M1030.9 483.7Q1035.7 482.5 1038.9 477.8"/>
<path d="M998.7 482.6Q1000.5 486.8 1004 486.5Q1007.8 485.5 1010 486.5Q1013 488 1015.9 490.6"/>
<path d="M1021.8 483.7L1023.9 487.4"/>
<path d="M1030.9 489.6Q1036 489.3 1039.5 490.6"/>
<path d="M1024.4 495L1033.6 494.4"/>
<path d="M998.7 457.9L1002.4 455.2"/>
</g>
</g>
<path d="M1019.1 465.7L1028.2 474.8 1019.1 483.9 1010 474.8z" fill="#4a4a4a"/>
<!-- vintage -->
<path d="M800 526Q809 521.5 820 523.5Q831 521.5 840 525.5Q843.5 534 841.5 545Q843.5 557 840 565Q830 568.5 820 566.5Q809 568.5 799.5 565Q796.5 556 798 545Q796 534 800 526z" fill="#8a48c4" stroke="#d040d8" stroke-width="1.2"/>
<g fill="none" stroke="#2e9a5e" stroke-width="3.4" stroke-linecap="round" stroke-dasharray="3 0.1">
<path d="M801 545Q805 541 808 537Q812 534 815 531Q818 528 821 525.8"/>
<path d="M827.5 539.2Q830 536 833 533.5Q836 531 838.3 529.5"/>
<path d="M803.5 562.5Q806 559 809 557Q812 555 815 553.3"/>
<path d="M819.8 563Q825 559 829 556Q833 552 835.5 549Q837.5 546.5 838.8 544.6"/>
</g>
<path d="M820 534.5L830.5 545 820 555.5 809.5 545z" fill="#8a48c4" stroke="#d040d8" stroke-width="1"/>
<path d="M820 537L828 545 820 553 812 545z" fill="#4a4a4a"/>
<!-- phoenix -->
<g clip-path="url(#c6)">
<rect x="865" y="524" width="42" height="42" fill="#ff9a33"/>
<g stroke="#a8300e" stroke-width="5" fill="none" opacity="0.9">
<path d="M862 549L893 521"/>
<path d="M868 568.5L906 531"/>
</g>
<path d="M903 549L910 543" stroke="#a8300e" stroke-width="4" opacity="0.7"/>
</g>
<path d="M885.8 535L895.8 545 885.8 555 875.8 545z" fill="#4a4a4a"/>
<!-- halftone -->
<g clip-path="url(#c7)">
<rect x="931" y="524" width="42" height="42" fill="#ff6447"/>
<g fill="#a83038">
<circle cx="941" cy="535" r="4.8"/><circle cx="957" cy="529" r="4.8"/><circle cx="968" cy="540" r="4.8"/>
<circle cx="937" cy="550" r="4.8"/><circle cx="965" cy="556" r="4.8"/><circle cx="944" cy="563" r="4.8"/>
<circle cx="960" cy="569" r="4.8"/><circle cx="933" cy="527" r="3"/>
</g>
</g>
<path d="M952 535L962 545 952 555 942 545z" fill="#4a4a4a"/>
</svg>
<div class="a" style="left:799px;top:454px;width:42px;height:42px;border-radius:9px;background:conic-gradient(from 0deg,#20c8c0,#20a8f0 60deg,#8060e0 120deg,#e040a0 160deg,#ff6060 200deg,#ffb020 240deg,#b0e040 290deg,#30e890 330deg,#20c8c0)"></div>
<div class="a" style="left:803px;top:458px;width:34px;height:34px;border-radius:5px;background:#e2ecf2"></div>
<div class="a" style="left:806px;top:461px;width:28px;height:28px;background:conic-gradient(from 0deg,#30e890,#20a8f0 90deg,#e040b0 180deg,#ff9020 230deg,#b0e040 300deg,#30e890);clip-path:polygon(50% 0,100% 50%,50% 100%,0 50%)"></div>
<div class="a" style="left:810.4px;top:465.4px;width:19.2px;height:19.2px;background:#4a4a4a;clip-path:polygon(50% 0,100% 50%,50% 100%,0 50%)"></div>
<div class="t" style="left:803px;top:501px;font-size:9px;color:#eee;--w:33;transform:scaleX(0.7333)">ユニコーン</div>
<div class="t" style="left:879px;top:501px;font-size:9px;color:#eee;--w:13;transform:scaleX(0.7222)">ルナ</div>
<div class="t" style="left:929px;top:501px;font-size:9px;color:#eee;--w:44;transform:scaleX(0.8148)">いたずら書き</div>
<div class="t" style="left:1008px;top:501px;font-size:9px;color:#eee;--w:19;transform:scaleX(0.7037)">うねり</div>
<div class="t" style="left:803px;top:570px;font-size:9px;color:#eee;--w:33;transform:scaleX(0.7333)">ビンテージ</div>
<div class="t" style="left:867px;top:570px;font-size:9px;color:#eee;--w:37;transform:scaleX(0.6852)">フェニックス</div>
<div class="t" style="left:934px;top:570px;font-size:9px;color:#eee;--w:37;transform:scaleX(0.6852)">ハーフトーン</div>

<!-- transform panel header -->
<div class="a dots" style="left:787px;top:671px;width:259px;height:30px;background:#212121"></div>
<div class="a" style="left:793px;top:676px;width:5px;height:19px;background:#3a3a3a;border-radius:2.5px"></div>
<div class="a" style="left:806px;top:675px;width:31px;height:21px;background:#333;border-radius:5px"></div>
<div class="t" style="left:809px;top:679.5px;font-size:11px;color:#f0f0f0;--w:23;transform:scaleX(1.0454)">変形</div>
<div class="t" style="left:842px;top:679.5px;font-size:11px;color:#cfcfcf;--w:40;transform:scaleX(0.7273)">ナビゲータ</div>
<div class="t" style="left:892px;top:679.5px;font-size:11px;color:#cfcfcf;--w:22;transform:scaleX(1.0000)">履歴</div>
<svg style="left:1031px;top:677px" width="15" height="16" viewBox="0 0 15 16"><rect x="0.7" y="0.7" width="16" height="14.6" rx="3" fill="none" stroke="#bdbdbd" stroke-width="1.2"/><path d="M3.5 5L7.5 11 11.5 5" fill="none" stroke="#e8e8e8" stroke-width="1.5"/></svg>

<!-- STATUS -->
<div class="a" style="left:0;top:832.5px;width:1046px;height:1.5px;background:#121212"></div>
<div class="a" style="left:0;top:834px;width:1046px;height:23px;background:#3e3e3e"></div>
<!-- transform panel content -->
<svg style="left:787px;top:701px" width="259" height="132" viewBox="787 701 259 132">
<rect x="803" y="737" width="9" height="9" fill="#fff"/>
<path d="M812 741.5H835" stroke="#8a8a8a" stroke-width="1"/>
<rect x="819.6" y="738" width="5.8" height="6.2" fill="#a8a8a8"/>
<rect x="834.5" y="738" width="5.8" height="6.2" fill="#a8a8a8"/>
<g fill="#1f1f1f">
<rect x="870" y="713.7" width="64.6" height="18.6" rx="3"/>
<rect x="962" y="713.7" width="64.6" height="18.6" rx="3"/>
<rect x="870" y="737.3" width="64.6" height="19.4" rx="3"/>
<rect x="870" y="767.1" width="64.6" height="19.4" rx="3"/>
<rect x="962" y="767.1" width="64.6" height="19.4" rx="3"/>
</g>
<rect x="962" y="737.3" width="64.6" height="19.4" rx="3" fill="#2b2b2b"/>
<path d="M925 776L928 779 931 776" fill="none" stroke="#e0e0e0" stroke-width="1.1"/>
<g fill="none" stroke="#bdbdbd" stroke-width="1.1">
<rect x="1034" y="725" width="7" height="8" rx="2"/>
<rect x="1034" y="736.5" width="7" height="8" rx="2"/>
</g>
<rect x="1033" y="733.5" width="9" height="2.5" fill="#333"/>
<path d="M1037.5 731V738.5" stroke="#bdbdbd" stroke-width="0.8" stroke-dasharray="1 1"/>
<rect x="988" y="801" width="16" height="15" fill="none" stroke="#6a6a6a" stroke-width="1" stroke-dasharray="3 2"/>
<rect x="988.5" y="808" width="8.5" height="8" rx="1.5" fill="#6a6a6a"/>
<path d="M1017 807.5L1020 810.5 1023 807.5" fill="none" stroke="#e0e0e0" stroke-width="1.1"/>
</svg>
<div class="t" style="left:857px;top:719px;font-size:11px;color:#9a9a9a;--w:9;transform:scaleX(0.8649)">X:</div>
<div class="t" style="left:876px;top:718.3px;font-size:11px;color:#f2f2f2;--w:42;transform:scaleX(0.9814)">52.2 mm</div>
<div class="t" style="left:946px;top:719px;font-size:11px;color:#9a9a9a;--w:12;transform:scaleX(0.9057)">W:</div>
<div class="t" style="left:968px;top:718.3px;font-size:11px;color:#f2f2f2;--w:33;transform:scaleX(0.9814)">27 mm</div>
<div class="t" style="left:857px;top:743px;font-size:11px;color:#9a9a9a;--w:9;transform:scaleX(0.9187)">Y:</div>
<div class="t" style="left:876px;top:742.3px;font-size:11px;color:#f2f2f2;--w:42;transform:scaleX(0.9814)">14.1 mm</div>
<div class="t" style="left:948px;top:743px;font-size:11px;color:#6a6a6a;--w:9;transform:scaleX(0.8182)">H:</div>
<div class="t" style="left:968px;top:742.3px;font-size:11px;color:#6e6e6e;--w:33;transform:scaleX(1.2000)">0 mm</div>
<div class="t" style="left:857px;top:772px;font-size:11px;color:#9a9a9a;--w:9;transform:scaleX(0.8182)">R:</div>
<div class="t" style="left:875px;top:771.3px;font-size:11px;color:#f2f2f2;--w:16;transform:scaleX(1.1784)">0 °</div>
<div class="t" style="left:950px;top:772px;font-size:11px;color:#9a9a9a;--w:8;transform:scaleX(0.8707)">L:</div>
<div class="t" style="left:968px;top:771.3px;font-size:11px;color:#f2f2f2;--w:33;transform:scaleX(0.9814)">27 mm</div>
<!-- status bar -->
<svg style="left:0;top:835px" width="210" height="22" viewBox="0 835 210 22">
<g fill="#6e6e6e">
<rect x="3" y="842" width="1.5" height="9.5"/><path d="M13 842V851.5L5.5 846.75z"/>
<path d="M30.5 842V851.5L22 846.75z"/>
<path d="M137 842V851.5L145 846.75z"/><rect x="145.5" y="842" width="1.5" height="9.5"/>
</g>
<path d="M120 842V851.5L128.5 846.75z" fill="#e0e0e0"/>
<g fill="none" stroke="#8e8e8e" stroke-width="1">
<rect x="156" y="841.5" width="10" height="12"/><path d="M158 844.5h6M158 847h6M158 849.5h6M167.5 843v11.5h-9"/>
<rect x="176" y="841.5" width="9" height="10"/><rect x="179" y="845" width="9" height="10" fill="#3e3e3e"/><path d="M181 848.5h5M181 851h5"/>
</g>
</svg>
<div class="t" style="left:64px;top:841.3px;font-size:11px;color:#e0e0e0;--w:21;transform:scaleX(0.9810);-webkit-text-stroke-width:0">1 / 1</div>
<div class="t" style="left:211px;top:840.5px;font-size:11.5px;font-weight:bold;color:#fff;--w:34.3;transform:scaleX(0.7146)">クリック</div>
<div class="t" style="left:245.5px;top:840.5px;font-size:11.5px;color:#cfcfcf;--w:126.5;transform:scaleX(0.7530)">でオブジェクトを選択します。</div>
<div class="t" style="left:375.5px;top:840.5px;font-size:11.5px;font-weight:bold;color:#fff;--w:33.5;transform:scaleX(0.6979)">クリック</div>
<div class="t" style="left:410px;top:840.5px;font-size:11.5px;color:#cfcfcf;--w:7;transform:scaleX(1.0419)">+</div>
<div class="t" style="left:418px;top:840.5px;font-size:11.5px;font-weight:bold;color:#fff;--w:24;transform:scaleX(0.9389)">Shift</div>
<div class="t" style="left:442.5px;top:840.5px;font-size:11.5px;color:#cfcfcf;--w:99;transform:scaleX(0.8250)">で選択に追加します。</div>
<div class="t" style="left:545.4px;top:840.5px;font-size:11.5px;font-weight:bold;color:#fff;--w:35;transform:scaleX(0.7292)">ドラッグ</div>
<div class="t" style="left:580.6px;top:840.5px;font-size:11.5px;color:#cfcfcf;--w:133;transform:scaleX(0.7389)">でノードをマーキー選択します。</div>
<div class="t" style="left:716.6px;top:840.5px;font-size:11.5px;font-weight:bold;color:#fff;--w:34.4;transform:scaleX(0.7167)">ドラッグ</div>
<div class="t" style="left:752px;top:840.5px;font-size:11.5px;color:#cfcfcf;--w:7;transform:scaleX(1.0419)">+</div>
<div class="t" style="left:760.3px;top:840.5px;font-size:11.5px;font-weight:bold;color:#fff;--w:15.7;transform:scaleX(1.0232)">Alt</div>
<div class="t" style="left:776.5px;top:840.5px;font-size:11.5px;color:#cfcfcf;--w:161;transform:scaleX(0.7892)">でなげなわノード選択を開始します。</div>
<div class="t" style="left:942.4px;top:840.5px;font-size:11.5px;font-weight:bold;color:#fff;--w:34.5;transform:scaleX(0.7188)">クリック</div>
<div class="t" style="left:978px;top:840.5px;font-size:11.5px;color:#cfcfcf;--w:7;transform:scaleX(1.0419)">+</div>
<div class="t" style="left:986px;top:840.5px;font-size:11.5px;font-weight:bold;color:#fff;--w:19.5;transform:scaleX(1.2709)">Alt</div>
<div class="t" style="left:1006px;top:840.5px;font-size:11.5px;color:#cfcfcf;--w:22.5;transform:scaleX(0.6250)">でポリ</div>

<svg style="left:1036px;top:845px" width="9" height="9" viewBox="0 0 9 9"><g fill="#8a8a8a"><rect x="7" y="7" width="1.2" height="1.2"/><rect x="4" y="7" width="1.2" height="1.2"/><rect x="7" y="4" width="1.2" height="1.2"/><rect x="1" y="7" width="1.2" height="1.2"/><rect x="4" y="4" width="1.2" height="1.2"/><rect x="7" y="1" width="1.2" height="1.2"/></g></svg>

<script>
document.querySelectorAll('.t').forEach(function(el){
  var w=parseFloat(getComputedStyle(el).getPropertyValue('--w'));
  if(!w) return;
  el.style.transform='none';var r=el.getBoundingClientRect().width;
  if(r>0) el.style.transform='scaleX('+(w/r)+')';
});
</script>
</body></html>
